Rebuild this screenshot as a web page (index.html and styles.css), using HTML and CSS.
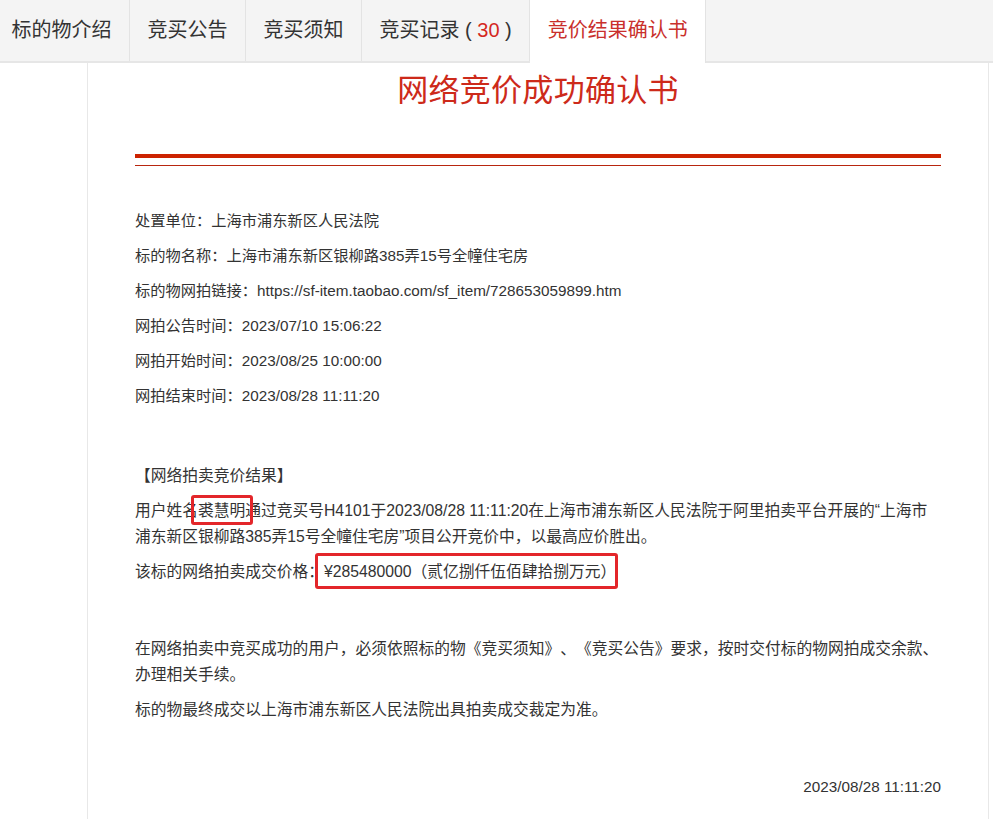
FILE: index.html
```html
<!DOCTYPE html>
<html lang="zh-CN">
<head>
	<meta charset="UTF-8">
	<title>竞价结果确认书</title>
	<link rel="stylesheet" href="styles.css">
</head>
<body>

	<ul class="tabs">
		<li class="tab tab-first">标的物介绍</li>
		<li class="tab">竞买公告</li>
		<li class="tab">竞买须知</li>
		<li class="tab">竞买记录 ( <em>30</em> )</li>
		<li class="tab active">竞价结果确认书</li>
	</ul>

	<div class="panel">
		<div class="doc">
			<h1>网络竞价成功确认书</h1>
			<div class="rule"></div>

			<div class="info">
				<p>处置单位：上海市浦东新区人民法院</p>
				<p>标的物名称：上海市浦东新区银柳路385弄15号全幢住宅房</p>
				<p>标的物网拍链接：https://sf-item.taobao.com/sf_item/728653059899.htm</p>
				<p>网拍公告时间：2023/07/10 15:06:22</p>
				<p>网拍开始时间：2023/08/25 10:00:00</p>
				<p>网拍结束时间：2023/08/28 11:11:20</p>
			</div>

			<div class="result">
				<p>【网络拍卖竞价结果】</p>
				<p>用户姓名<span class="mark mark-name">裘慧明</span>通过竞买号H4101于2023/08/28 11:11:20在上海市浦东新区人民法院于阿里拍卖平台开展的“上海市浦东新区银柳路385弄15号全幢住宅房”项目公开竞价中，以最高应价胜出。</p>
				<p>该标的网络拍卖成交价格：<span class="mark mark-price">¥285480000（贰亿捌仟伍佰肆拾捌万元）</span></p>
			</div>

			<div class="notes">
				<p>在网络拍卖中竞买成功的用户，必须依照标的物《竞买须知》、《竞买公告》要求，按时交付标的物网拍成交余款、办理相关手续。</p>
				<p>标的物最终成交以上海市浦东新区人民法院出具拍卖成交裁定为准。</p>
			</div>

			<p class="date">2023/08/28 11:11:20</p>
		</div>
	</div>

</body>
</html>
```

FILE: styles.css
```css
body {
	margin: 0;
	font-family: "Liberation Sans", "Noto Sans CJK SC", sans-serif;
	color: #333;
	background: #fff;
	overflow: hidden;
	text-spacing-trim: space-all;
}

.tabs {
	display: flex;
	margin: 0;
	padding: 0;
	list-style: none;
	height: 61px;
	background: #f4f4f4;
	border-bottom: 2px solid #e6e6e6;
	margin-left: -6px;
}

.tab {
	padding: 0 17.5px;
	font-size: 20px;
	line-height: 61px;
	color: #333;
	border-right: 1px solid #e3e3e3;
	white-space: nowrap;
}

.tab em {
	font-style: normal;
	color: #d4281e;
}

.tab.active {
	background: #fff;
	color: #c9302c;
	height: 63px;
}

.panel {
	margin-left: 87px;
	width: 900px;
	border-left: 1px solid #e8e8e8;
	border-right: 1px solid #e8e8e8;
	min-height: 760px;
}

.doc {
	width: 806px;
	margin-left: 47px;
}

h1 {
	margin: 0;
	padding-top: 8px;
	font-size: 31px;
	line-height: 40px;
	font-weight: normal;
	text-align: center;
	color: #cd2a1a;
	letter-spacing: 0.3px;
}

.rule {
	margin-top: 43px;
	height: 4px;
	background: #cc2200;
	position: relative;
	margin-bottom: 12px;
}

.rule::after {
	content: "";
	display: block;
	height: 1px;
	background: #b8260f;
	position: relative;
	top: 11px;
}

p {
	margin: 9px 0;
	font-size: 15.75px;
	line-height: 26px;
}

.info {
	margin-top: 50px;
}

.info p {
	font-size: 15.25px;
}

.result {
	margin-top: 54px;
	padding-right: 4px;
}

.notes {
	margin-top: 51px;
}

.mark {
	position: relative;
	display: inline-block;
}

.mark::after {
	content: "";
	position: absolute;
	border: 3px solid #e3262a;
	border-radius: 3px;
}

.mark-name::after {
	top: -3px;
	bottom: -1px;
	left: -7px;
	right: -8px;
}

.mark-price::after {
	top: -6px;
	bottom: -4px;
	left: -9px;
	right: -2px;
}

.date {
	margin-top: 51px;
	font-size: 15.25px;
	text-align: right;
}
```
